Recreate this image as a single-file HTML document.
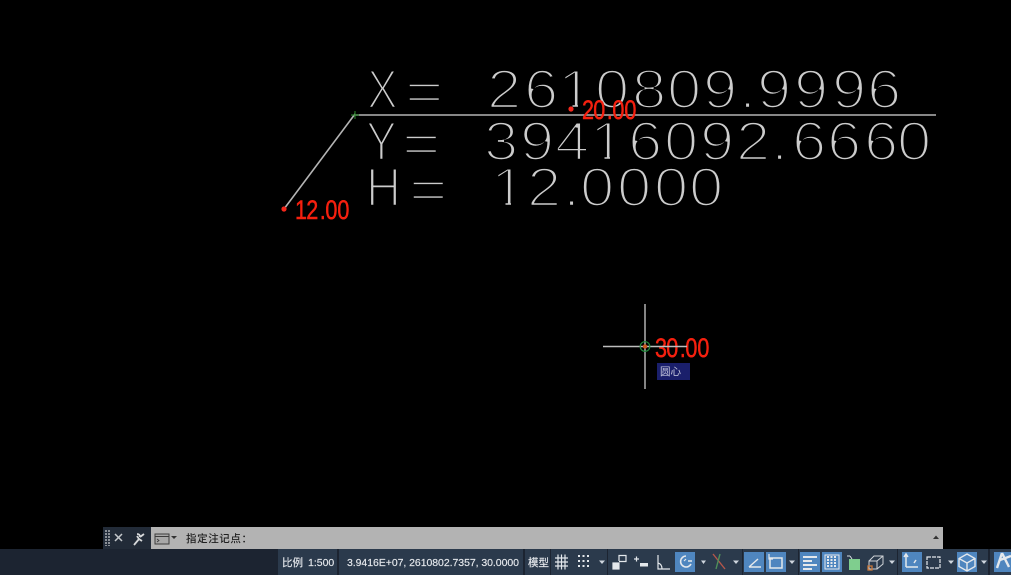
<!DOCTYPE html>
<html><head><meta charset="utf-8">
<style>
html,body{margin:0;padding:0;background:#000;width:1011px;height:575px;overflow:hidden}
svg{position:absolute;left:0;top:0;display:block;filter:blur(.35px)}
.b{font-family:"Liberation Sans",sans-serif;font-size:55px;fill:#cccccc;stroke:#000;stroke-width:2.6}
.r{font-family:"Liberation Sans",sans-serif;font-size:27px;fill:#f5200f;stroke:#f5200f;stroke-width:.5}
</style></head><body>
<svg width="1011" height="575" viewBox="0 0 1011 575" xmlns="http://www.w3.org/2000/svg">
<rect width="1011" height="575" fill="#000"/>
<text class="b" transform="translate(367 108) scale(.84 1)" x="0">X</text>
<text class="b" transform="translate(405 110) scale(1.2 1)" x="0">=</text>
<text class="b" transform="translate(1 108) scale(1.12 1)" x="433.9 467 497.3 530.4 563.4 594.6 626.8 658.9 675 708 742 773.2">2610809.9996</text>
<text class="b" transform="translate(366 160) scale(.84 1)" x="0">Y</text>
<text class="b" transform="translate(402 162) scale(1.2 1)" x="0">=</text>
<text class="b" transform="translate(1 160) scale(1.12 1)" x="431.25 463.4 494.6 525.900 559.8 592 624.1 656.3 687.5 706.3 737.5 770.5 800">39416092.6660</text>
<text class="b" transform="translate(366 206) scale(.88 1)" x="0">H</text>
<text class="b" transform="translate(409 208) scale(1.2 1)" x="0">=</text>
<text class="b" transform="translate(1 206) scale(1.12 1)" x="437.5 469.6 501.8 517 550 583 614.3">12.0000</text>
<g fill="#000">
<rect x="560" y="102" width="12.500" height="8"/><rect x="578" y="102" width="13" height="8"/>
<rect x="592" y="154" width="12.500" height="8"/><rect x="610" y="154" width="13" height="8"/>
<rect x="493" y="200" width="12.500" height="8"/><rect x="511" y="200" width="13" height="8"/>
</g>
<path d="M284 209L355 114M355 115H936" stroke="#b4b4b4" stroke-width="1.6" fill="none"/>
<path d="M351 115h8M355 111v8" stroke="#2c8a2c" stroke-width="1" fill="none"/>
<circle cx="284" cy="209" r="2.6" fill="#f5281c"/>
<circle cx="571" cy="109" r="2.6" fill="#f5281c"/>
<text class="r" transform="translate(295 219) scale(.8 1)" x="0 14 31 38 53">12.00</text>
<text class="r" transform="translate(582 119) scale(.8 1)" x="0 14 31 38 53">20.00</text>
<text class="r" transform="translate(655 357) scale(.8 1)" x="0 14 31 38 53">30.00</text>
<path d="M645 304V389M603 346.500H687" stroke="#bdbdbd" stroke-width="1.4" fill="none"/>
<circle cx="645" cy="346.500" r="4.800" fill="none" stroke="#1f8a3a" stroke-width="1.200"/>
<circle cx="645" cy="346.500" r="2.200" fill="#c8591c"/>
<rect x="657" y="363" width="33" height="17" fill="#1a1f6b"/>
<text x="660" y="375" font-family="'Liberation Sans','Noto Sans CJK SC',sans-serif" font-size="10.500" fill="#c9cbe0">圆心</text>
<rect x="103" y="527" width="840" height="22" fill="#b3b3b3"/>
<rect x="103" y="527" width="48" height="22" fill="#222b38"/>
<path d="M106 530v16M109 530v16" stroke="#8a8f96" stroke-width="2" stroke-dasharray="2 1" fill="none"/>
<path d="M115 534l7 7M122 534l-7 7" stroke="#c4c8cc" stroke-width="1.500" fill="none"/>
<path d="M134 545l5-6M139 539l-2-3M139 539l3 2M137 534q3 0 3 3M140 537l4-3" stroke="#d6d8da" stroke-width="1.800" fill="none"/>
<rect x="155" y="534" width="14" height="10" fill="#a8a8a8" stroke="#3c3c3c"/>
<path d="M155 536.500h14" stroke="#3c3c3c"/>
<path d="M157 539l2 1.500-2 1.500" stroke="#3c3c3c" fill="none" stroke-width=".8"/>
<path d="M171 536h6l-3 3z" fill="#333"/>
<text x="186" y="542" font-family="'Liberation Sans','Noto Sans CJK SC',sans-serif" font-size="10.500" font-weight="500" fill="#1f1f1f" letter-spacing=".6">指定注记点：</text>
<path d="M933 539h6l-3-3.500z" fill="#333"/>
<rect x="0" y="549" width="1011" height="26" fill="#1c2431"/>
<g fill="#2b3a4c">
<rect x="278" y="549" width="59" height="26"/>
<rect x="339" y="549" width="184" height="26"/>
<rect x="525" y="549" width="25" height="26"/>
<rect x="551" y="549" width="56" height="26"/>
<rect x="608" y="549" width="134" height="26"/>
<rect x="743" y="549" width="55" height="26"/>
<rect x="799" y="549" width="98" height="26"/>
<rect x="898" y="549" width="90" height="26"/>
<rect x="990" y="549" width="21" height="26"/>
</g>
<g font-family="'Liberation Sans','Noto Sans CJK SC',sans-serif" font-size="10.500" fill="#e6e9ed" stroke="#e6e9ed" stroke-width=".15">
<text x="282" y="566">比例</text><text x="308" y="566">1:500</text>
<text x="347" y="566" textLength="172">3.9416E+07, 2610802.7357, 30.0000</text>
<text x="528" y="566">模型</text>
</g>
<g fill="#4f86bf">
<rect x="675" y="552" width="20" height="20"/>
<rect x="744" y="552" width="20" height="20"/>
<rect x="766" y="552" width="20" height="20"/>
<rect x="800" y="552" width="20" height="20"/>
<rect x="822" y="552" width="20" height="20"/>
<rect x="902" y="552" width="20" height="20"/>
<rect x="957" y="552" width="20" height="20"/>
<rect x="994" y="552" width="17" height="20"/>
</g>
<path d="M599 560.500h6l-3 3.500zM701 560.500h5l-2.500 3.500zM733 560.500h6l-3 3.500zM789 560.500h6l-3 3.500zM889 560.500h6l-3 3.500zM948 560.500h6l-3 3.500zM981 560.500h6l-3 3.500z" fill="#cfd6de"/>
<g fill="none" stroke="#e4e8ec" stroke-width="1.200">
<path d="M555 558h13M555 562h13M555 566h13M558 554.500v15M561.500 554.500v15M565 554.500v15"/>
<path d="M578 556h11M578 561h11M578 566h11" stroke-dasharray="2 2.500" stroke-width="2"/>
<path d="M619 561v-5.500h7v6h-7"/>
<rect x="613" y="563" width="6" height="6" fill="#e4e8ec"/>
<path d="M634 559h5M636.500 556.500v5"/>
<rect x="640" y="563" width="8" height="3.500" fill="#e4e8ec" stroke="none"/>
<path d="M658 555v14h12M658 563q4 1 4 6"/>
<path d="M692 561h-4M686 556a5.500 5.500 0 1 0 5 8" stroke-width="1.600"/>
<path d="M684 561l2-2"/>
<path d="M749 567h12M749 567l9-8" stroke-width="1.500"/>
<rect x="770" y="558" width="12" height="10" stroke-width="1.500"/>
<path d="M769 554v5h4"/>
<path d="M803 557h14M803 561h9M803 565h14M803 569h9" stroke-width="2"/>
<rect x="825" y="555" width="14" height="14" stroke-width="1"/>
<path d="M827 557h10M827 560h10M827 563h10M827 566h10" stroke-width="2" stroke-dasharray="2 1.500"/>
<path d="M869 561l0 8h8v-8zM869 561l5-5h9v8l-6 5M877 561l6-5" stroke-width="1" stroke="#d0d4d8"/>
<path d="M906 567h12M906 567v-12M904 557l2-3 2 3M916 560l-2 3" stroke-width="1.500"/>
<path d="M927 557h13v11h-13z" stroke-dasharray="4 1"/>
<path d="M967 554l8 4.500v8l-8 4.500-8-4.500v-8zM959 558.500l8 4.500 8-4.500M967 563v8" stroke-width="1.400"/>
<path d="M1002 553l-5 15M1002 553l7 14M1000 560l11-4" stroke-width="2.400"/>
</g>
<rect x="849" y="559" width="11" height="11" fill="#7fce8e"/>
<path d="M847 556h3M850 556l2 3" stroke="#d8dde2" fill="none"/>
<rect x="868" y="566" width="4" height="4" fill="none" stroke="#c8773a" stroke-width="1.300"/>
<path d="M713 554l12 15" stroke="#b5564a" stroke-width="1.400"/>
<path d="M720 554l-4 15" stroke="#4f8f5a" stroke-width="1.400"/>
</svg>
</body></html>
